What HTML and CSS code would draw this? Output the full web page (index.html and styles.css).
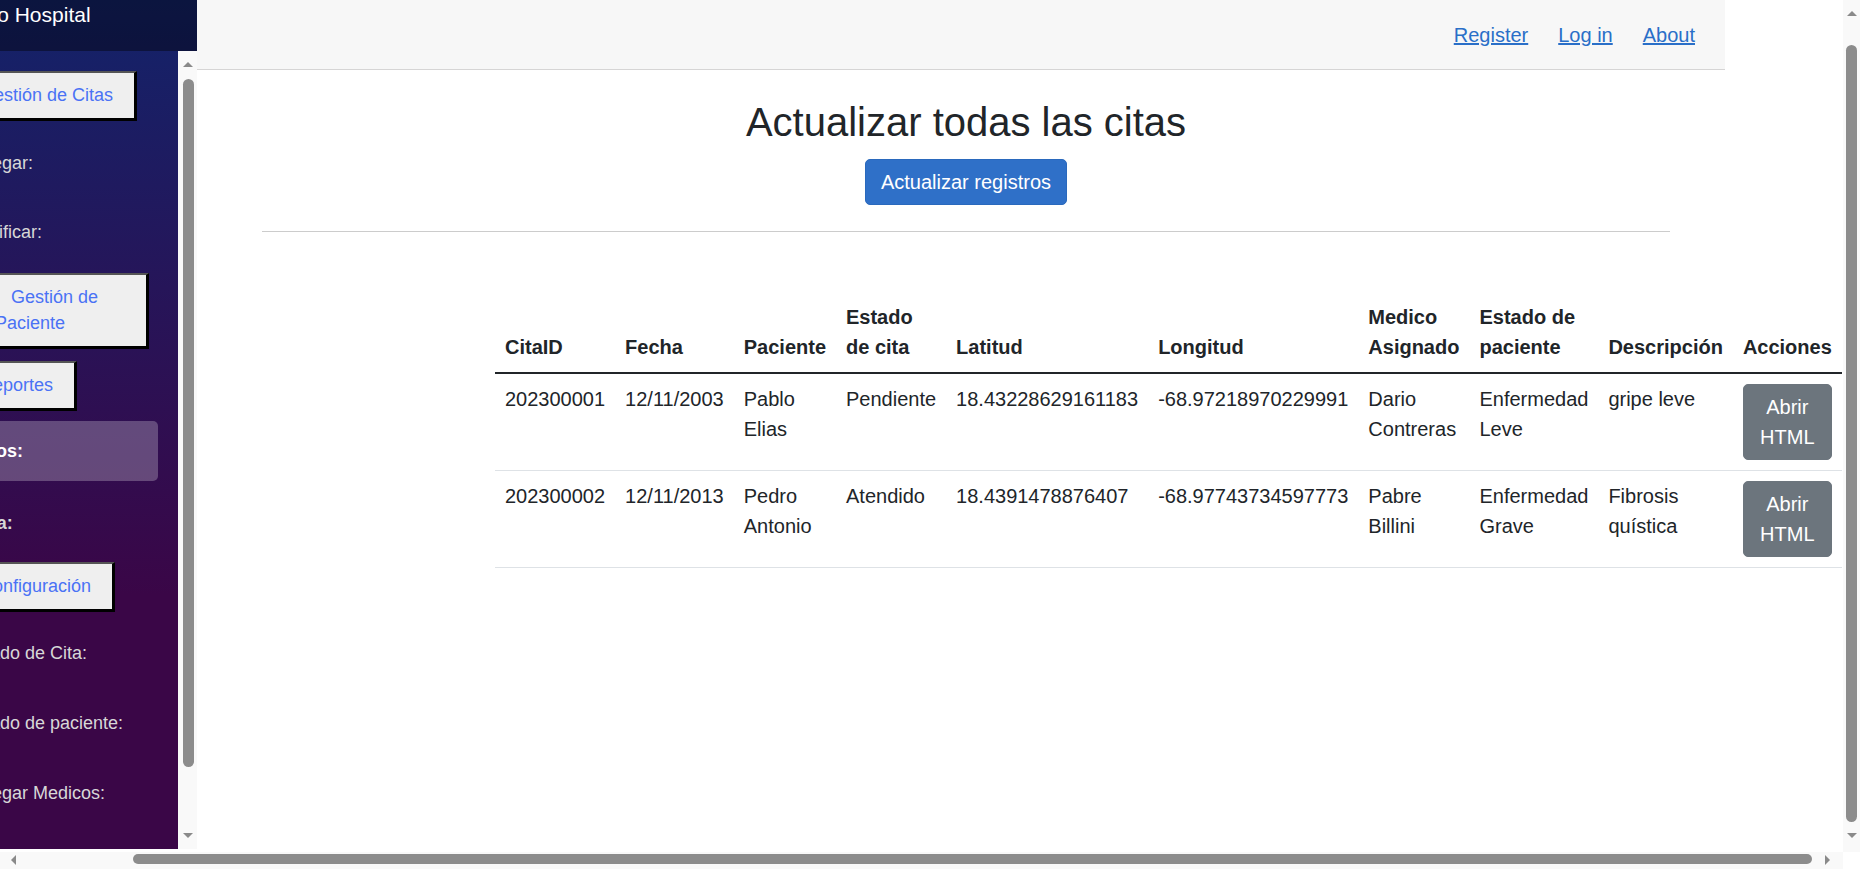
FILE: index.html
```html
<!DOCTYPE html>
<html lang="es">
<head>
<meta charset="utf-8">
<title>Actualizar todas las citas</title>
<link rel="stylesheet" href="styles.css">
</head>
<body>
<div class="screen">
  <div class="page">
    <aside class="sidebar">
      <div class="brand-bar"><span class="brand">Proyecto Hospital</span></div>
      <div class="nav-wrap">
        <nav class="nav">
          <button class="side-btn btn-citas">Gestión de Citas</button>
          <div class="side-label l-agregar">Agregar:</div>
          <div class="side-label l-modificar">Modificar:</div>
          <button class="side-btn btn-paciente"><span class="ico"></span>Gestión de Paciente</button>
          <button class="side-btn btn-reportes">Reportes</button>
          <div class="nav-link active"><b>Datos:</b></div>
          <div class="side-label bold l-vista">Vista:</div>
          <button class="side-btn btn-config">Configuración</button>
          <div class="side-label l-estado-cita">Estado de Cita:</div>
          <div class="side-label l-estado-pac">Estado de paciente:</div>
          <div class="side-label l-medicos">Agregar Medicos:</div>
        </nav>
        <div class="vbar vbar-side">
          <span class="arrow arrow-up"></span>
          <span class="thumb thumb-side"></span>
          <span class="arrow arrow-down arrow-side-down"></span>
        </div>
      </div>
    </aside>
    <main class="main">
      <div class="top-row">
        <a href="#">Register</a>
        <a href="#">Log in</a>
        <a href="#">About</a>
      </div>
      <article class="content">
        <h2 class="title">Actualizar todas las citas</h2>
        <div class="actions">
          <button class="btn btn-primary">Actualizar registros</button>
        </div>
        <hr class="divider">
        <table class="table">
          <thead>
            <tr>
              <th>CitaID</th>
              <th>Fecha</th>
              <th>Paciente</th>
              <th>Estado de cita</th>
              <th>Latitud</th>
              <th>Longitud</th>
              <th>Medico Asignado</th>
              <th>Estado de paciente</th>
              <th>Descripción</th>
              <th>Acciones</th>
            </tr>
          </thead>
          <tbody>
            <tr>
              <td>202300001</td>
              <td>12/11/2003</td>
              <td>Pablo Elias</td>
              <td>Pendiente</td>
              <td>18.43228629161183</td>
              <td>-68.97218970229991</td>
              <td>Dario Contreras</td>
              <td>Enfermedad Leve</td>
              <td>gripe leve</td>
              <td><button class="btn btn-secondary">Abrir HTML</button></td>
            </tr>
            <tr>
              <td>202300002</td>
              <td>12/11/2013</td>
              <td>Pedro Antonio</td>
              <td>Atendido</td>
              <td>18.4391478876407</td>
              <td>-68.97743734597773</td>
              <td>Pabre Billini</td>
              <td>Enfermedad Grave</td>
              <td>Fibrosis quística</td>
              <td><button class="btn btn-secondary">Abrir HTML</button></td>
            </tr>
          </tbody>
        </table>
      </article>
    </main>
  </div>
  <div class="vbar vbar-window">
    <span class="arrow arrow-up"></span>
    <span class="thumb thumb-window"></span>
    <span class="arrow arrow-down arrow-window-down"></span>
  </div>
  <div class="hbar">
    <span class="arrow arrow-left"></span>
    <span class="hthumb"></span>
    <span class="arrow arrow-right"></span>
  </div>
  <div class="corner"></div>
</div>
</body>
</html>
```

FILE: styles.css
```css
* { box-sizing: border-box; }

html, body {
  margin: 0;
  padding: 0;
  width: 1860px;
  height: 869px;
  overflow: hidden;
  background: #ffffff;
  font-family: "Liberation Sans", Arial, sans-serif;
  color: #212529;
}

.screen {
  display: grid;
  grid-template-columns: 1843px 17px;
  grid-template-rows: 852px 17px;
  width: 1860px;
  height: 869px;
}

.page {
  display: flex;
  overflow: hidden;
  background: #ffffff;
}

/* ---------- Sidebar ---------- */
.sidebar {
  flex: none;
  width: 197px;
  height: 849px;
  display: flex;
  flex-direction: column;
  background-image: linear-gradient(180deg, #13236a 0%, #3a0647 70%);
}

.brand-bar {
  flex: none;
  height: 51px;
  padding-top: 3px;
  background: rgba(0, 0, 0, 0.4);
  overflow: hidden;
  white-space: nowrap;
}

.brand {
  display: block;
  margin-left: -74px;
  font-size: 21px;
  line-height: 24px;
  color: #ffffff;
}

.nav-wrap {
  flex: 1;
  display: flex;
  min-height: 0;
}

.nav {
  width: 178px;
  flex: none;
  overflow: hidden;
  display: flex;
  flex-direction: column;
  align-items: flex-start;
}

.side-btn {
  display: block;
  flex: none;
  font-family: inherit;
  font-size: 18px;
  line-height: 26px;
  color: #4a72f5;
  background: #efefef;
  text-align: left;
  white-space: nowrap;
  padding: 9px 21px 10px 22px;
  border-style: solid;
  border-width: 2px 3px 3px 2px;
  border-color: #555555 #000000 #000000 #555555;
  border-radius: 0;
}

.btn-citas { margin: 20px 0 0 -44px; }
.btn-paciente {
  margin: 28px 0 0 -29px;
  width: 178px;
  white-space: normal;
}
.btn-reportes { margin: 12px 0 0 -44px; }
.btn-config { margin: 26px 0 0 -44px; }

.ico {
  display: inline-block;
  width: 16px;
  height: 1px;
}

.side-label {
  flex: none;
  font-size: 18px;
  line-height: 26px;
  color: #d7d7d7;
  white-space: nowrap;
  margin-left: -36px;
}
.side-label.bold { font-weight: bold; }

.l-agregar { margin-top: 29px; }
.l-modificar { margin-top: 43px; }
.l-vista { margin-top: 29px; }
.l-estado-cita { margin-top: 28px; }
.l-estado-pac { margin-top: 44px; }
.l-medicos { margin-top: 44px; }

.nav-link {
  flex: none;
  align-self: stretch;
  height: 60px;
  margin: 10px 20px 0 -60px;
  padding-left: 27px;
  display: flex;
  align-items: center;
  border-radius: 5px;
  background: rgba(255, 255, 255, 0.25);
  color: #ffffff;
  font-size: 18px;
  white-space: nowrap;
}

/* ---------- Scrollbars ---------- */
.vbar {
  display: flex;
  flex-direction: column;
  align-items: center;
  background: #f9f9f9;
}

.vbar-side {
  width: 19px;
  flex: none;
  padding-top: 11px;
}

.vbar-window {
  padding-top: 11px;
}

.arrow {
  display: block;
  width: 0;
  height: 0;
  flex: none;
}
.arrow-up {
  border-left: 5px solid transparent;
  border-right: 5px solid transparent;
  border-bottom: 5px solid #8a8a8a;
}
.arrow-down {
  border-left: 5px solid transparent;
  border-right: 5px solid transparent;
  border-top: 5px solid #8a8a8a;
}
.arrow-left {
  border-top: 5px solid transparent;
  border-bottom: 5px solid transparent;
  border-right: 5px solid #8a8a8a;
}
.arrow-right {
  border-top: 5px solid transparent;
  border-bottom: 5px solid transparent;
  border-left: 5px solid #8a8a8a;
}

.thumb {
  display: block;
  flex: none;
  width: 11px;
  background: #8c8c8c;
  border-radius: 6px;
}
.thumb-side {
  margin-top: 12px;
  height: 688px;
  margin-left: 1px;
}
.arrow-side-down { margin-top: 66px; }

.thumb-window {
  margin-top: 29px;
  height: 777px;
}
.arrow-window-down { margin-top: 11px; }

.hbar {
  display: flex;
  align-items: center;
  padding-left: 11px;
  background: #f9f9f9;
}
.hthumb {
  display: block;
  flex: none;
  margin-left: 117px;
  width: 1679px;
  height: 10px;
  margin-top: -3px;
  background: #8c8c8c;
  border-radius: 5px;
}
.hbar .arrow-right { margin-left: 13px; }
.hbar .arrow { margin-top: -2px; }

.corner { background: #ffffff; }

/* ---------- Main ---------- */
.main {
  flex: none;
  width: 1528px;
}

.top-row {
  height: 70px;
  background: #f7f7f7;
  border-bottom: 1px solid #d6d5d5;
  display: flex;
  justify-content: flex-end;
  align-items: center;
  gap: 30px;
  padding-right: 30px;
}

.top-row a {
  font-size: 20px;
  color: #2a6fc8;
  text-decoration: underline;
  white-space: nowrap;
  margin-top: 2px;
}

.content {
  padding: 28px 55px 0 65px;
}

.title {
  margin: 0 0 13px;
  font-size: 40px;
  line-height: 48px;
  font-weight: 400;
  text-align: center;
  color: #212529;
}

.actions { text-align: center; }

.btn {
  display: inline-block;
  font-family: inherit;
  font-size: 20px;
  line-height: 30px;
  padding: 7px 15px;
  border-radius: 5px;
  color: #ffffff;
  text-align: center;
}

.btn-primary {
  background: #2f70c8;
  border: 1px solid #2a69bd;
}

.btn-secondary {
  background: #6c757d;
  border: 1px solid #6c757d;
}

.divider {
  margin: 26px 0 0;
  border: 0;
  border-top: 1px solid #cccccc;
  height: 0;
}

.table {
  width: 1px;
  margin: 60px 0 0 233px;
  border-collapse: collapse;
  font-size: 20px;
  line-height: 30px;
  color: #212529;
}

.table th {
  padding: 10px;
  text-align: left;
  vertical-align: bottom;
  font-weight: bold;
  border-bottom: 2px solid #212529;
}

.table td {
  padding: 10px;
  vertical-align: top;
  border-bottom: 1px solid #dee2e6;
}
```
